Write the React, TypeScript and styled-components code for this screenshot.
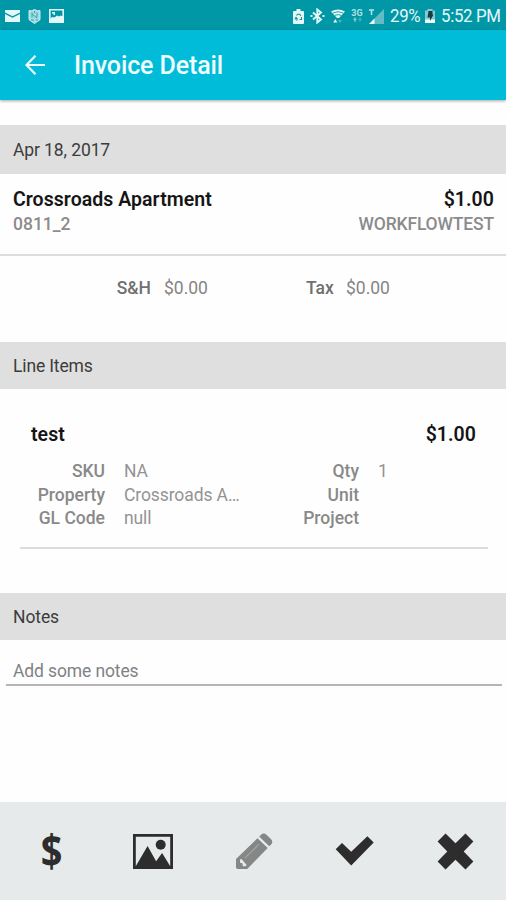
import React from "react";
import styled, { createGlobalStyle } from "styled-components";

const GlobalStyle = createGlobalStyle`
  * { box-sizing: border-box; }
  body { margin: 0; background: #fefefe; font-family: Roboto, sans-serif; }
`;

const Screen = styled.div`
  display: flex;
  flex-direction: column;
  width: 506px;
  height: 900px;
  overflow: hidden;
  background: #fefefe;
`;

const StatusBar = styled.div`
  display: flex;
  flex: none;
  justify-content: space-between;
  height: 30px;
  padding: 0 6px 0 5px;
  background: #0097a7;
  color: #e4f8fa;
`;

const StatusGroup = styled.div<{ $gap?: number }>`
  display: flex;
  align-items: center;
  gap: ${(p) => p.$gap ?? 0}px;
  padding-top: 2px;
  svg { display: block; flex: none; }
`;

const StatusText = styled.span<{ $width: number }>`
  width: ${(p) => p.$width}px;
  font-size: 18.5px;
  line-height: 28px;
  letter-spacing: -0.35px;
  white-space: nowrap;
  transform: scaleX(0.91);
  transform-origin: left;
`;

const AppBar = styled.header`
  display: flex;
  flex: none;
  align-items: center;
  height: 70px;
  padding-left: 25px;
  gap: 29px;
  background: #00bcd9;
  color: #f0fdff;
  box-shadow: 0 1px 3px rgba(0, 0, 0, 0.35);
`;

const Title = styled.h1`
  margin: 2px 0 0;
  font-size: 25px;
  font-weight: 500;
  line-height: 30px;
  letter-spacing: -0.12px;
`;

const Content = styled.main`
  display: flex;
  flex: 1;
  flex-direction: column;
  padding-top: 25px;
`;

const SectionHeader = styled.h2<{ $height: number; $tracking?: number }>`
  display: flex;
  flex: none;
  align-items: center;
  height: ${(p) => p.$height}px;
  margin: 0;
  padding: 0 13px;
  background: #dfdfdf;
  color: #3c3c3c;
  font-size: 17.5px;
  font-weight: 400;
  letter-spacing: ${(p) => p.$tracking ?? -0.1}px;
`;

const Summary = styled.section`
  height: 82px;
  padding: 13px 12px 0 13px;
  border-bottom: 2px solid #dcdcdc;
`;

const SplitRow = styled.div`
  display: flex;
  justify-content: space-between;
  line-height: 25px;
`;

const Strong = styled.span`
  color: #151515;
  font-size: 19.5px;
  font-weight: 600;
  letter-spacing: 0.05px;
`;

const Muted = styled.span<{ $tracking?: number }>`
  color: #8b8b8b;
  font-size: 17.5px;
  font-weight: 500;
  letter-spacing: ${(p) => p.$tracking ?? 0}px;
`;

const Charges = styled.section`
  display: grid;
  grid-template-columns: 151px 155px 27px 1fr;
  align-items: center;
  height: 62px;
  margin-bottom: 24px;
  padding-top: 1px;
  color: #777;
  font-size: 17.5px;
`;

const ChargeLabel = styled.span`
  color: #707070;
  font-weight: 500;
  text-align: right;
`;

const ChargeValue = styled.span`
  padding-left: 13px;
  color: #858585;
`;

const Item = styled.section`
  height: 160px;
  margin: 0 18px 44px 20px;
  padding: 33px 12px 0 11px;
  border-bottom: 2px solid #dcdcdc;
`;

const Details = styled.dl`
  display: grid;
  grid-template-columns: 74px 117px 99px 1fr;
  grid-auto-rows: 23.5px;
  column-gap: 19px;
  margin: 13px 0 0;
  font-size: 17.5px;
  line-height: 23.5px;
`;

const Label = styled.dt`
  color: #898989;
  font-weight: 500;
  text-align: right;
  white-space: nowrap;
`;

const Value = styled.dd`
  margin: 0;
  color: #939393;
  letter-spacing: -0.1px;
  white-space: nowrap;
`;

const NotesInput = styled.input`
  width: 496px;
  height: 34px;
  margin: 12px 4px 0 6px;
  padding: 6px 7px 0;
  border: 0;
  border-bottom: 2px solid #b5b5b5;
  background: transparent;
  color: #333;
  font: 400 17.5px Roboto, sans-serif;
  letter-spacing: -0.12px;
  &::placeholder { color: #828282; opacity: 1; }
`;

const Toolbar = styled.footer`
  display: grid;
  flex: none;
  grid-template-columns: repeat(5, 1fr);
  height: 98px;
  padding-left: 1px;
  background: #e6eaea;
  color: #2d2d2d;
`;

const ToolButton = styled.button<{ $disabled?: boolean }>`
  display: flex;
  align-items: center;
  justify-content: center;
  padding: 0;
  border: 0;
  background: transparent;
  color: ${(p) => (p.$disabled ? "#858686" : "#2d2d2d")};
  svg { display: block; }
`;

const Dollar = styled.span`
  margin-top: -3px;
  font: 700 44px/44px "Open Sans", sans-serif;
  transform: scaleX(0.86);
`;

const MailIcon = () => (
  <svg width="15" height="12" viewBox="0 0 15 12" fill="currentColor">
    <path d="M0 0h15v2.5L7.5 6.3 0 2.5zM0 4l7.5 3.8L15 4v8H0z" />
  </svg>
);

const ShieldIcon = () => (
  <svg width="13" height="15" viewBox="0 0 13 15">
    <path d="M1 1.5l3 .4L6.500 .2 9 1.900l3-.4v9.200L6.500 14.500 1 10.700z" fill="#a4dbe1" stroke="#c5edf0" strokeWidth="1" />
    <path d="M4 3.500v5M9 3.500v5M4 5l5 4M6.500 2v2M3 11h3M8 11h2" stroke="#2fa6b3" strokeWidth="1" />
  </svg>
);

const PhotoIcon = () => (
  <svg width="15" height="14" viewBox="0 0 15 14">
    <path d="M.8.8h13.400v12.400H.8z" fill="#0097a7" stroke="currentColor" strokeWidth="1.600" />
    <path d="M1 10l2-2 2.500.5L8 6.500l2 1 1.500-1 2.500 1V14H1z" fill="currentColor" />
    <path d="M3 3h3v3H4.500V4.500H3z" fill="currentColor" />
  </svg>
);

const BatterySaverIcon = () => (
  <svg width="11" height="15" viewBox="0 0 11 15">
    <path d="M3.500 0h4v2H10q1 0 1 1v11q0 1-1 1H1q-1 0-1-1V3q0-1 1-1h2.500z" fill="currentColor" />
    <path d="M3.500 6.500L4.500 5.200h2.200L8 7M2 10.500l1-2 1.500 1.500M8.500 8v2.500H6.500M3 11h1.500" fill="none" stroke="#168f9c" strokeWidth="1.100" />
  </svg>
);

const BluetoothIcon = () => (
  <svg width="15" height="16" viewBox="0 0 15 16" fill="none" stroke="currentColor" strokeWidth="1.900">
    <path d="M3 4.500l8 7-3.700 3V1.500l3.700 3-8 7" />
    <path d="M.5 8h2M12.500 8h2" strokeWidth="2" />
  </svg>
);

const WifiIcon = () => (
  <svg width="14" height="15" viewBox="0 0 14 15">
    <path d="M0 2.500Q7-1.500 14 2.500L8 9H6z" fill="currentColor" />
    <path d="M1.800 4Q7 1.400 12.200 4M4 6.300q3-1.300 6 0" fill="none" stroke="#1199a8" strokeWidth=".9" />
    <path d="M2.300 13.500l2-3.500 2 3.500z" fill="currentColor" />
    <path d="M7 11h4l-2 3z" fill="#4fb4bf" />
  </svg>
);

const NetworkText = styled.span`
  display: flex;
  flex-direction: column;
  align-items: center;
  width: 12px;
  color: #b4e2e6;
  font-size: 9px;
  font-weight: 700;
  line-height: 8px;
`;

const NetworkIcon = () => (
  <NetworkText>
    <span>3G</span>
    <svg width="9" height="6" viewBox="0 0 9 6">
      <path d="M0 3l2-3 2 3H2.700v2H1.300V3z" fill="#80c9d0" />
      <path d="M5 2h1.300V0h1.400v2H9L7 5z" fill="#45afbb" />
    </svg>
  </NetworkText>
);

const SignalIcon = () => (
  <svg width="15" height="15" viewBox="0 0 15 15">
    <path d="M15 0v15H0z" fill="#62bcc6" />
    <path d="M5.500 9.500V15H0z" fill="currentColor" />
    <path d="M0 1h5M2.500 1v5" stroke="#b8e4e8" strokeWidth="1.500" />
  </svg>
);

const ChargingIcon = () => (
  <svg width="10" height="14" viewBox="0 0 10 14">
    <path d="M2.500 0h5v1.500H10V14H0V1.500h2.500z" fill="#85c8cf" />
    <path d="M0 10.500h10V14H0z" fill="#f0ffff" />
    <path d="M3.500 2h4v3.500h1L5 12V8.500H2.500z" fill="#153d43" />
  </svg>
);

const BackIcon = () => (
  <svg width="20" height="20" viewBox="0 0 20 20" fill="none" stroke="currentColor" strokeWidth="2.200">
    <path d="M20 10H1.500M10.500 .8L1.500 10l9 9.200" />
  </svg>
);

const GalleryIcon = () => (
  <svg width="40" height="35" viewBox="0 0 40 35">
    <path d="M1.400 1.400h37.200v32.200H1.400z" fill="none" stroke="currentColor" strokeWidth="2.800" />
    <path d="M2 33.500L14.600 12l8.500 15.200 6-8.200L38 33.500z" fill="currentColor" />
    <circle cx="27.700" cy="10.800" r="5" fill="currentColor" />
  </svg>
);

const PencilIcon = () => (
  <svg width="38" height="37" viewBox="0 0 38 37" fill="currentColor">
    <path d="M1 26L22.500 5.200l10.200 9.700L12.200 36H2.800Q1 36 1 34.200z" />
    <path d="M24.200 3.600l1.900-1.900q2.600-2.500 5.300 0l4.500 4.400q2.700 2.700.2 5.300l-1.800 1.900z" />
    <path d="M5 26.500v3.300l2.400.5.500 2.900h2.700l1.100-1.300L6.500 26z" fill="#e6eaea" />
    <path d="M9.800 25.200L24 11.200" stroke="#a6a9a9" strokeWidth="1.100" />
  </svg>
);

const CheckIcon = () => (
  <svg width="40" height="30" viewBox="0 0 40 30" fill="currentColor">
    <path d="M.7 13.200L7 7l9.200 8.700L32.400.2l6.300 6.200-22.500 23z" />
  </svg>
);

const CrossIcon = () => (
  <svg width="37" height="37" viewBox="0 0 37 37" fill="currentColor">
    <path d="M8.500.6l10 9.700 10-9.700 7.900 7.900-9.700 10 9.700 10-7.900 7.900-10-9.700-10 9.700-7.900-7.900 9.700-10-9.700-10z" />
  </svg>
);

export default function App() {
  return (
    <Screen>
      <GlobalStyle />
      <StatusBar>
        <StatusGroup $gap={8}>
          <MailIcon />
          <ShieldIcon />
          <PhotoIcon />
        </StatusGroup>
        <StatusGroup $gap={6}>
          <BatterySaverIcon />
          <BluetoothIcon />
          <WifiIcon />
          <NetworkIcon />
          <SignalIcon />
          <StatusText $width={29}>29%</StatusText>
          <ChargingIcon />
          <StatusText $width={59}>5:52 PM</StatusText>
        </StatusGroup>
      </StatusBar>
      <AppBar>
        <BackIcon />
        <Title>Invoice Detail</Title>
      </AppBar>
      <Content>
        <SectionHeader $height={49}>Apr 18, 2017</SectionHeader>
        <Summary>
          <SplitRow>
            <Strong>Crossroads Apartment</Strong>
            <Strong>$1.00</Strong>
          </SplitRow>
          <SplitRow>
            <Muted>0811_2</Muted>
            <Muted $tracking={-0.17}>WORKFLOWTEST</Muted>
          </SplitRow>
        </Summary>
        <Charges>
          <ChargeLabel>S&amp;H</ChargeLabel>
          <ChargeValue>$0.00</ChargeValue>
          <ChargeLabel>Tax</ChargeLabel>
          <ChargeValue>$0.00</ChargeValue>
        </Charges>
        <SectionHeader $height={47} $tracking={-0.15}>Line Items</SectionHeader>
        <Item>
          <SplitRow>
            <Strong>test</Strong>
            <Strong>$1.00</Strong>
          </SplitRow>
          <Details>
            <Label>SKU</Label>
            <Value>NA</Value>
            <Label>Qty</Label>
            <Value>1</Value>
            <Label>Property</Label>
            <Value>Crossroads A…</Value>
            <Label>Unit</Label>
            <Value />
            <Label>GL Code</Label>
            <Value>null</Value>
            <Label>Project</Label>
            <Value />
          </Details>
        </Item>
        <SectionHeader $height={47}>Notes</SectionHeader>
        <NotesInput placeholder="Add some notes" />
      </Content>
      <Toolbar>
        <ToolButton aria-label="Payment"><Dollar>$</Dollar></ToolButton>
        <ToolButton aria-label="Image"><GalleryIcon /></ToolButton>
        <ToolButton aria-label="Edit" $disabled><PencilIcon /></ToolButton>
        <ToolButton aria-label="Approve"><CheckIcon /></ToolButton>
        <ToolButton aria-label="Reject"><CrossIcon /></ToolButton>
      </Toolbar>
    </Screen>
  );
}
